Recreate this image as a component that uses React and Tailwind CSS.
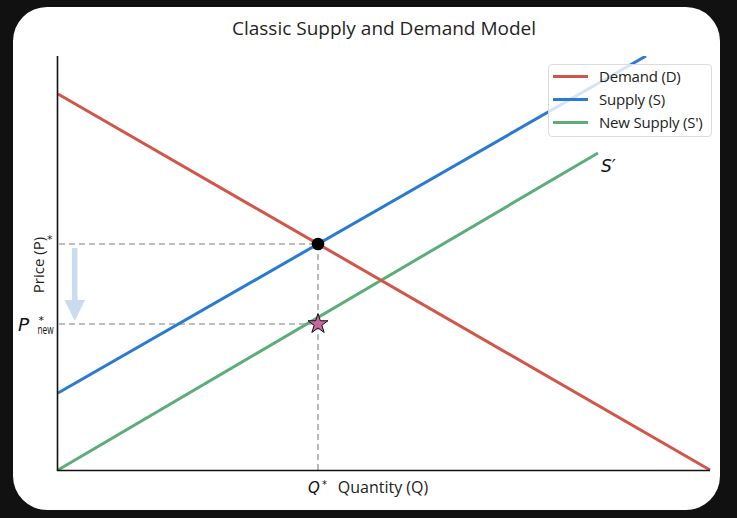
import React from "react";

const FONT = "'Open Sans', 'Liberation Sans', sans-serif";
const MATH = "'DejaVu Sans', 'Liberation Sans', sans-serif";

function Legend() {
  const rows = [
    { label: "Demand (D)", color: "bg-[#d2554a]" },
    { label: "Supply (S)", color: "bg-[#2a7ad2]" },
    { label: "New Supply (S')", color: "bg-[#5cad78]" },
  ];
  return (
    <div className="absolute left-[535px] top-[8px] w-[164px] h-[73px] rounded-[4px] border border-[#dcdcdc] bg-white/80 pl-[4px] pb-[2px] flex flex-col">
      {rows.map((r) => (
        <div key={r.label} className="h-[23px] flex items-center gap-[11px]">
          <div className={`w-[35px] h-[3px] shrink-0 ${r.color}`} />
          <span className="text-[15px] leading-none text-[#222] whitespace-nowrap tracking-[-0.2px]">{r.label}</span>
        </div>
      ))}
    </div>
  );
}

function Chart() {
  const star =
    "318,313.5 320.35,320.76 327.99,320.76 321.8,325.24 324.17,332.49 318,328 311.83,332.49 314.2,325.24 308.01,320.76 315.65,320.76";
  return (
    <svg width="707" height="454" viewBox="13 56 707 454" className="block">
      {/* dashed guides */}
      <g stroke="#a9a9a9" strokeWidth="1.6" strokeDasharray="6 4" fill="none">
        <line x1="59" y1="244" x2="318" y2="244" />
        <line x1="59" y1="324" x2="318" y2="324" />
        <line x1="318" y1="244" x2="318" y2="470" />
      </g>
      {/* arrow */}
      <rect x="72" y="248" width="5.5" height="53" fill="#c9dcee" />
      <polygon points="64.5,300 85,300 74.75,321" fill="#c9dcee" />
      {/* curves */}
      <line x1="58" y1="393" x2="646" y2="56" stroke="#2a7ad2" strokeWidth="3" />
      <line x1="58" y1="470" x2="598" y2="153" stroke="#5cad78" strokeWidth="3" />
      <line x1="58" y1="94" x2="710" y2="470" stroke="#d2554a" strokeWidth="3" />
      {/* axes */}
      <line x1="57.5" y1="56" x2="57.5" y2="471" stroke="#111" strokeWidth="1.6" />
      <line x1="57" y1="470.5" x2="710" y2="470.5" stroke="#111" strokeWidth="1.6" />
      {/* markers */}
      <circle cx="318" cy="244" r="6.3" fill="#000" />
      <polygon points={star} fill="#c8679e" stroke="#111" strokeWidth="1" strokeLinejoin="miter" />
      {/* S' label */}
      <text x="601" y="172" fontFamily={MATH} fontStyle="italic" fontSize="17" fill="#111">
        S′
      </text>
      {/* y axis label */}
      <text
        x="0"
        y="0"
        transform="translate(44 265) rotate(-90)"
        textAnchor="middle"
        fontFamily={FONT}
        fontSize="15"
        fill="#222"
      >
        Price (P)
      </text>
      <text x="47" y="243" fontFamily={MATH} fontSize="11" fill="#222">
        *
      </text>
      {/* P new */}
      <text x="18" y="330.5" fontFamily={MATH} fontStyle="italic" fontSize="18.5" fill="#111">
        P
      </text>
      <text x="38.5" y="324" fontFamily={MATH} fontSize="11" fill="#111">
        *
      </text>
      <text
        x="37.5"
        y="334"
        fontFamily={FONT}
        fontSize="12.5"
        textLength="16"
        lengthAdjust="spacingAndGlyphs"
        fill="#111"
      >
        new
      </text>
      {/* Q* */}
      <text x="308" y="492.5" fontFamily={MATH} fontStyle="italic" fontSize="15" fill="#111">
        Q
      </text>
      <text x="322" y="488" fontFamily={MATH} fontSize="10" fill="#111">
        *
      </text>
      <text x="383" y="492.5" textAnchor="middle" fontFamily={FONT} fontSize="16" fill="#222">
        Quantity (Q)
      </text>
    </svg>
  );
}

export default function App() {
  return (
    <div className="w-[737px] h-[518px] bg-[#111111] pt-[7px] pl-[13px] pr-[17px] pb-[8px]">
      <div
        className="relative h-full bg-white rounded-[34px] flex flex-col overflow-hidden"
        style={{ fontFamily: FONT }}
      >
        <div className="h-[49px] shrink-0 pl-[45px] pr-[10px] pt-[9px] text-center text-[19px] leading-[24px] text-[#1f1f1f]">
          Classic Supply and Demand Model
        </div>
        <div className="relative flex-1">
          <Chart />
          <Legend />
        </div>
      </div>
    </div>
  );
}
